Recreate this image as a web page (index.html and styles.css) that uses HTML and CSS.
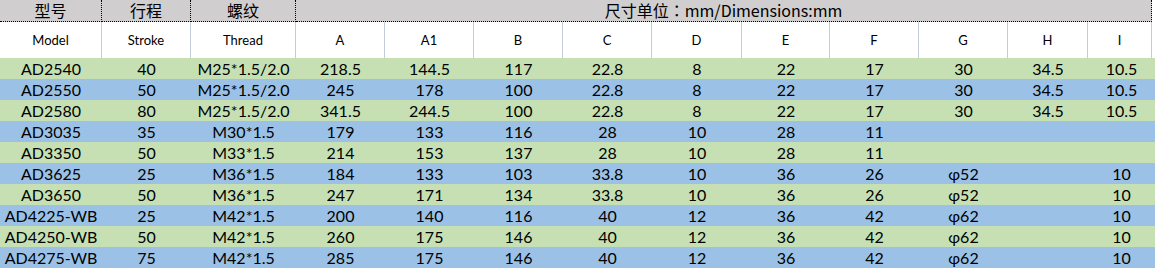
FILE: index.html
```html
<!DOCTYPE html>
<html lang="zh">
<head>
<meta charset="utf-8">
<title>尺寸表</title>
<link rel="stylesheet" href="styles.css">
</head>
<body>
<table class="spec">
  <colgroup>
    <col class="c-model"><col class="c-stroke"><col class="c-thread">
    <col class="c-a"><col class="c-a1"><col class="c-b"><col class="c-c">
    <col class="c-d"><col class="c-e"><col class="c-f"><col class="c-g">
    <col class="c-h"><col class="c-i"><col class="c-pad">
  </colgroup>
  <thead>
    <tr class="head-cn">
      <th class="dot-r">型号</th>
      <th class="dot-r">行程</th>
      <th class="dot-r">螺纹</th>
      <th class="dot-r" colspan="10">尺寸单位<span class="colon" lang="zh-Hant-TW">：</span>mm/Dimensions:mm</th>
      <th class="pad"></th>
    </tr>
    <tr class="head-en">
      <th>Model</th><th>Stroke</th><th>Thread</th>
      <th>A</th><th>A1</th><th>B</th><th>C</th><th>D</th><th>E</th>
      <th>F</th><th>G</th><th>H</th><th>I</th>
      <th class="pad"></th>
    </tr>
  </thead>
  <tbody>
    <tr class="green"><td>AD2540</td><td>40</td><td>M25*1.5/2.0</td><td>218.5</td><td>144.5</td><td>117</td><td>22.8</td><td>8</td><td>22</td><td>17</td><td>30</td><td>34.5</td><td colspan="2">10.5</td></tr>
    <tr class="blue"><td>AD2550</td><td>50</td><td>M25*1.5/2.0</td><td>245</td><td>178</td><td>100</td><td>22.8</td><td>8</td><td>22</td><td>17</td><td>30</td><td>34.5</td><td colspan="2">10.5</td></tr>
    <tr class="green"><td>AD2580</td><td>80</td><td>M25*1.5/2.0</td><td>341.5</td><td>244.5</td><td>100</td><td>22.8</td><td>8</td><td>22</td><td>17</td><td>30</td><td>34.5</td><td colspan="2">10.5</td></tr>
    <tr class="blue"><td>AD3035</td><td>35</td><td>M30*1.5</td><td>179</td><td>133</td><td>116</td><td>28</td><td>10</td><td>28</td><td>11</td><td></td><td></td><td colspan="2"></td></tr>
    <tr class="green"><td>AD3350</td><td>50</td><td>M33*1.5</td><td>214</td><td>153</td><td>137</td><td>28</td><td>10</td><td>28</td><td>11</td><td></td><td></td><td colspan="2"></td></tr>
    <tr class="blue"><td>AD3625</td><td>25</td><td>M36*1.5</td><td>184</td><td>133</td><td>103</td><td>33.8</td><td>10</td><td>36</td><td>26</td><td>φ52</td><td></td><td colspan="2">10</td></tr>
    <tr class="green"><td>AD3650</td><td>50</td><td>M36*1.5</td><td>247</td><td>171</td><td>134</td><td>33.8</td><td>10</td><td>36</td><td>26</td><td>φ52</td><td></td><td colspan="2">10</td></tr>
    <tr class="blue"><td>AD4225-WB</td><td>25</td><td>M42*1.5</td><td>200</td><td>140</td><td>116</td><td>40</td><td>12</td><td>36</td><td>42</td><td>φ62</td><td></td><td colspan="2">10</td></tr>
    <tr class="green"><td>AD4250-WB</td><td>50</td><td>M42*1.5</td><td>260</td><td>175</td><td>146</td><td>40</td><td>12</td><td>36</td><td>42</td><td>φ62</td><td></td><td colspan="2">10</td></tr>
    <tr class="blue"><td>AD4275-WB</td><td>75</td><td>M42*1.5</td><td>285</td><td>175</td><td>146</td><td>40</td><td>12</td><td>36</td><td>42</td><td>φ62</td><td></td><td colspan="2">10</td></tr>
  </tbody>
</table>
</body>
</html>
```
FILE: styles.css
```css
html, body {
  margin: 0;
  padding: 0;
  background: #ffffff;
}

.spec {
  table-layout: fixed;
  width: 1155px;
  border-collapse: separate;
  border-spacing: 0;
  color: #000;
}

.spec th, .spec td {
  box-sizing: border-box;
  padding: 0;
  text-align: center;
  font-weight: normal;
  white-space: nowrap;
}

.c-model { width: 102px; }
.c-stroke { width: 89px; }
.c-thread { width: 105px; }
.c-a { width: 89px; }
.c-a1 { width: 89px; }
.c-b { width: 89px; }
.c-c { width: 89px; }
.c-d { width: 90px; }
.c-e { width: 88px; }
.c-f { width: 89px; }
.c-g { width: 89px; }
.c-h { width: 80px; }
.c-i { width: 64px; }
.c-pad { width: 3px; }

.head-cn th {
  height: 22px;
  background: #d0cece;
  border-bottom: 1px dotted #000;
  font-family: "Noto Sans CJK SC", sans-serif;
  font-size: 16px;
  line-height: 21px;
  vertical-align: middle;
}

.head-cn th.dot-r {
  border-right: 1px dotted #000;
}

.colon {
  font-family: "Noto Sans CJK TC", "Noto Sans CJK SC", sans-serif;
}

.head-en th {
  height: 36px;
  background: #fff;
  border-right: 1px solid #c3ccdb;
  font-family: Lato, sans-serif;
  font-size: 13px;
  line-height: 36px;
}

.spec th.pad {
  background: #fff;
  border: 0;
}

.spec tbody td {
  height: 21px;
  font-family: Lato, sans-serif;
  font-size: 16px;
  line-height: 21px;
  overflow: hidden;
}

.green td { background: #c6e0b4; }
.blue td { background: #9bc2e6; }
```
